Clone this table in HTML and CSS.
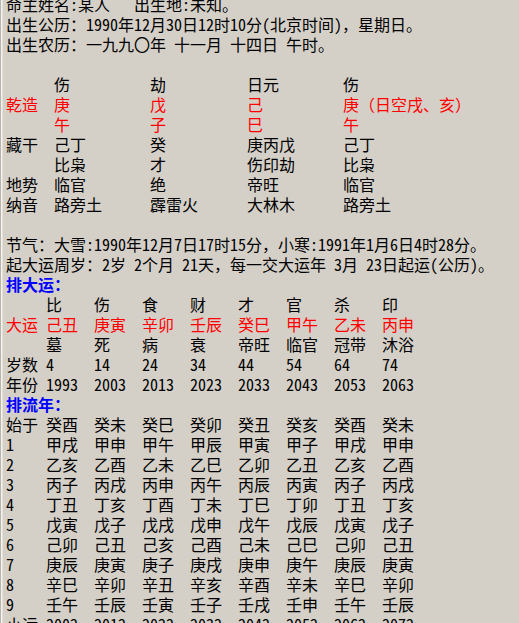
FILE: index.html
```html
<!DOCTYPE html>
<html lang="zh-CN">
<head>
<meta charset="utf-8">
<link rel="stylesheet" href="styles.css">
</head>
<body>
<div class="page">
  <div class="line">命主姓名:某人   出生地:未知。</div>
  <div class="line">出生公历：1990年12月30日12时10分(北京时间)，星期日。</div>
  <div class="line">出生农历：一九九〇年 十一月 十四日 午时。</div>
  <div class="line"></div>

  <div class="bazi">
    <span></span><span>伤</span><span>劫</span><span>日元</span><span>伤</span>
    <span class="red">乾造</span><span class="red">庚</span><span class="red">戊</span><span class="red">己</span><span class="red">庚（日空戌、亥）</span>
    <span></span><span class="red">午</span><span class="red">子</span><span class="red">巳</span><span class="red">午</span>
    <span>藏干</span><span>己丁</span><span>癸</span><span>庚丙戊</span><span>己丁</span>
    <span></span><span>比枭</span><span>才</span><span>伤印劫</span><span>比枭</span>
    <span>地势</span><span>临官</span><span>绝</span><span>帝旺</span><span>临官</span>
    <span>纳音</span><span>路旁土</span><span>霹雷火</span><span>大林木</span><span>路旁土</span>
  </div>
  <div class="line"></div>

  <div class="line">节气：大雪:1990年12月7日17时15分，小寒:1991年1月6日4时28分。</div>
  <div class="line">起大运周岁：2岁 2个月 21天，每一交大运年 3月 23日起运(公历)。</div>
  <div class="line title">排大运：</div>

  <div class="yun">
    <span></span><span>比</span><span>伤</span><span>食</span><span>财</span><span>才</span><span>官</span><span>杀</span><span>印</span>
    <span class="red">大运</span><span class="red">己丑</span><span class="red">庚寅</span><span class="red">辛卯</span><span class="red">壬辰</span><span class="red">癸巳</span><span class="red">甲午</span><span class="red">乙未</span><span class="red">丙申</span>
    <span></span><span>墓</span><span>死</span><span>病</span><span>衰</span><span>帝旺</span><span>临官</span><span>冠带</span><span>沐浴</span>
    <span>岁数</span><span>4</span><span>14</span><span>24</span><span>34</span><span>44</span><span>54</span><span>64</span><span>74</span>
    <span>年份</span><span>1993</span><span>2003</span><span>2013</span><span>2023</span><span>2033</span><span>2043</span><span>2053</span><span>2063</span>
  </div>

  <div class="line title">排流年：</div>

  <div class="yun">
    <span>始于</span><span>癸酉</span><span>癸未</span><span>癸巳</span><span>癸卯</span><span>癸丑</span><span>癸亥</span><span>癸酉</span><span>癸未</span>
    <span>1</span><span>甲戌</span><span>甲申</span><span>甲午</span><span>甲辰</span><span>甲寅</span><span>甲子</span><span>甲戌</span><span>甲申</span>
    <span>2</span><span>乙亥</span><span>乙酉</span><span>乙未</span><span>乙巳</span><span>乙卯</span><span>乙丑</span><span>乙亥</span><span>乙酉</span>
    <span>3</span><span>丙子</span><span>丙戌</span><span>丙申</span><span>丙午</span><span>丙辰</span><span>丙寅</span><span>丙子</span><span>丙戌</span>
    <span>4</span><span>丁丑</span><span>丁亥</span><span>丁酉</span><span>丁未</span><span>丁巳</span><span>丁卯</span><span>丁丑</span><span>丁亥</span>
    <span>5</span><span>戊寅</span><span>戊子</span><span>戊戌</span><span>戊申</span><span>戊午</span><span>戊辰</span><span>戊寅</span><span>戊子</span>
    <span>6</span><span>己卯</span><span>己丑</span><span>己亥</span><span>己酉</span><span>己未</span><span>己巳</span><span>己卯</span><span>己丑</span>
    <span>7</span><span>庚辰</span><span>庚寅</span><span>庚子</span><span>庚戌</span><span>庚申</span><span>庚午</span><span>庚辰</span><span>庚寅</span>
    <span>8</span><span>辛巳</span><span>辛卯</span><span>辛丑</span><span>辛亥</span><span>辛酉</span><span>辛未</span><span>辛巳</span><span>辛卯</span>
    <span>9</span><span>壬午</span><span>壬辰</span><span>壬寅</span><span>壬子</span><span>壬戌</span><span>壬申</span><span>壬午</span><span>壬辰</span>
    <span>小运</span><span>2002</span><span>2012</span><span>2022</span><span>2032</span><span>2042</span><span>2052</span><span>2062</span><span>2072</span>
  </div>
</div>
</body>
</html>
```

FILE: styles.css
```css
html, body {
  margin: 0;
  padding: 0;
  background: #d4d0c8;
  overflow: hidden;
}

body {
  height: 623px;
  border-left: 1px solid #b8b4ac;
  box-shadow: inset 1px 0 0 #f4f2ee, inset 2px 0 0 #e4e1da;
}

.page {
  font-family: "Noto Sans Mono CJK SC", "Noto Sans CJK SC", sans-serif;
  font-size: 16px;
  line-height: 20px;
  color: #000;
  padding-left: 5px;
  margin-top: -6px;
}

.line {
  height: 20px;
  white-space: pre;
}

.red {
  color: #ff0000;
}

.title {
  color: #0000ff;
  font-weight: bold;
}

.bazi {
  display: grid;
  grid-template-columns: 48px 96px 97px 96px auto;
  grid-auto-rows: 20px;
  white-space: pre;
}

.yun {
  display: grid;
  grid-template-columns: 40px repeat(8, 48px);
  grid-auto-rows: 20px;
  white-space: pre;
}
```
